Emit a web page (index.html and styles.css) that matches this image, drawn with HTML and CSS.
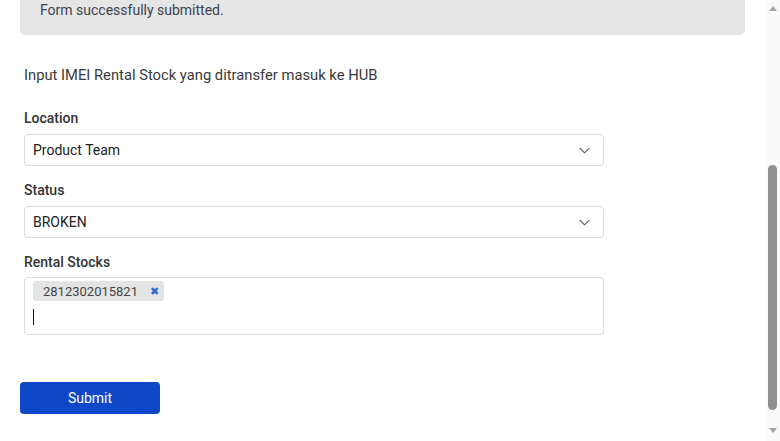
FILE: index.html
```html
<!DOCTYPE html>
<html>
<head>
<meta charset="utf-8">
<link rel="stylesheet" href="styles.css">
</head>
<body>
<div class="viewport">
  <main class="page">
    <div class="alert">Form successfully submitted.</div>
    <form class="form">
      <p class="desc">Input IMEI Rental Stock yang ditransfer masuk ke HUB</p>
      <div class="field">
        <label class="label">Location</label>
        <div class="select"><span>Product Team</span>
          <svg class="chev" width="11" height="7" viewBox="0 0 11 7"><path d="M0.8 1.2 L5.5 5.8 L10.2 1.2" fill="none" stroke="#555" stroke-width="1.1"/></svg>
        </div>
      </div>
      <div class="field">
        <label class="label">Status</label>
        <div class="select"><span>BROKEN</span>
          <svg class="chev" width="11" height="7" viewBox="0 0 11 7"><path d="M0.8 1.2 L5.5 5.8 L10.2 1.2" fill="none" stroke="#555" stroke-width="1.1"/></svg>
        </div>
      </div>
      <div class="field">
        <label class="label">Rental Stocks</label>
        <div class="multi">
          <span class="tag">2812302015821<span class="x">✖</span></span>
          <span class="cursor"></span>
        </div>
      </div>
    </form>
    <button class="submit" type="button">Submit</button>
  </main>
  <div class="scrollbar">
    <span class="arrow up"></span>
    <div class="track"><div class="thumb"></div></div>
    <span class="arrow down"></span>
  </div>
</div>
</body>
</html>
```
FILE: styles.css
```css
html, body { margin: 0; padding: 0; }
body {
  font-family: Roboto, "Liberation Sans", Arial, sans-serif;
  color: #333;
  background: #fff;
  font-size: 14px;
}
.viewport {
  display: flex;
  width: 780px;
  height: 441px;
  overflow: hidden;
}
.page {
  flex: 1;
  overflow: hidden;
}
.alert {
  margin: -15px 20px 0 20px;
  padding: 15px 20px;
  line-height: 20px;
  background: #e5e5e5;
  border-radius: 5px;
  color: #3d4450;
}
.form {
  margin: 0;
  padding: 30px 161px 0 24px;
}
.desc {
  margin: 0 0 23px 0;
  line-height: 20px;
  font-size: 14.75px;
  color: #3a3a3a;
}
.field { margin-bottom: 14px; }
.label {
  display: block;
  font-weight: 500;
  line-height: 20px;
  margin-bottom: 6px;
  color: #333;
}
.select {
  height: 30px;
  border: 1px solid #dcdcdc;
  border-radius: 4px;
  display: flex;
  align-items: center;
  justify-content: space-between;
  padding: 0 13px 0 8px;
  color: #222;
}
.chev { display: block; }
.multi {
  height: 53px;
  border: 1px solid #dcdcdc;
  border-radius: 4px;
  padding: 3px 8px 0 8px;
  display: flex;
  flex-direction: column;
  align-items: flex-start;
  margin-top: -1px;
}
.tag {
  display: inline-flex;
  align-items: center;
  height: 20px;
  padding: 0 5px 0 10px;
  background: #e4e4e4;
  border-radius: 3px;
  font-size: 13px;
  color: #444;
}
.x {
  color: #2d6ad8;
  font-size: 11px;
  margin-left: 12px;
}
.cursor {
  display: block;
  width: 1px;
  height: 16px;
  background: #111;
  margin-top: 8px;
}
.submit {
  display: block;
  margin: 47px 0 0 20px;
  width: 140px;
  height: 32px;
  border: none;
  border-radius: 4px;
  background: #0e47c8;
  color: #fff;
  font-family: Roboto, "Liberation Sans", Arial, sans-serif;
  font-size: 14px;
}
.scrollbar {
  width: 15px;
  background: #f9f9f9;
  display: flex;
  flex-direction: column;
  align-items: center;
}
.arrow {
  width: 0; height: 0;
  border-left: 4.5px solid transparent;
  border-right: 4.5px solid transparent;
  display: block;
}
.arrow.up { border-bottom: 5px solid #a3a3a3; margin-top: 6px; }
.arrow.down { border-top: 5px solid #a3a3a3; margin-bottom: 8px; }
.track {
  flex: 1;
  width: 9px;
  display: flex;
  flex-direction: column;
  justify-content: flex-start;
}
.thumb {
  margin-top: 154px;
  height: 245px;
  background: #8f8f8f;
  border-radius: 5px;
}
```
